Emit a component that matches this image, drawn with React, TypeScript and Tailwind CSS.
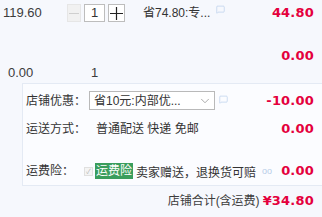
import { ChevronDown, MessageSquare } from "lucide-react";

const cn = `"Liberation Sans", "Noto Sans CJK SC", sans-serif`;
const num = `"DejaVu Sans", sans-serif`;

function Money({ value }: { value: string }) {
  return (
    <span
      className="text-[13px] font-bold text-[#e4003d] tracking-[0.2px]"
      style={{ fontFamily: num }}
    >
      {value}
    </span>
  );
}

export default function App() {
  return (
    <div
      className="w-[322px] h-[217px] overflow-hidden bg-[#f6f8fd] text-[12px] text-[#333]"
      style={{ fontFamily: cn }}
    >
      {/* item row */}
      <div className="h-[26px] flex items-center pr-2">
        <span className="w-[67px] pl-[3px] text-[13px] text-[#3c3c3c]">119.60</span>
        <div className="flex items-center gap-[3px]">
          <span className="w-[14px] h-[18px] border border-[#e6e6e6] bg-[#f1f1f1] flex items-center justify-center">
            <svg width="10" height="10" viewBox="0 0 10 10">
              <path d="M0 5.5h10" stroke="#cfcfcf" strokeWidth="1" />
            </svg>
          </span>
          <span className="w-[21px] h-[18px] border border-[#bdbdbd] bg-white flex items-center justify-center text-[13px]">
            1
          </span>
          <span className="w-[17px] h-[18px] border border-[#bdbdbd] bg-white flex items-center justify-center">
            <svg width="13" height="13" viewBox="0 0 13 13">
              <path d="M0 6.5h13M6.5 0v13" stroke="#222" strokeWidth="1.2" />
            </svg>
          </span>
        </div>
        <span className="ml-[18px] text-[#333]">省74.80:专...</span>
        <MessageSquare className="ml-[6px] -mt-[8px] w-[9px] h-[9px] text-[#a9c4e6]" strokeWidth={1.5} />
        <span className="ml-auto">
          <Money value="44.80" />
        </span>
      </div>

      <div className="h-[22px]" />

      <div className="h-[15px] flex items-center justify-end pr-2">
        <Money value="0.00" />
      </div>

      <div className="h-[20px] flex items-center text-[13px] text-[#3c3c3c]">
        <span className="w-[91px] pl-[8px]">0.00</span>
        <span>1</span>
      </div>

      {/* shop section */}
      <div className="ml-[22px] h-[103px] bg-[#fbfcff] border-t border-l border-b border-[#e4eaf4] flex flex-col">
        <div className="h-[33px] flex items-center pl-[3px] pr-2">
          <span className="w-[63px]">店铺优惠：</span>
          <div className="w-[126px] h-[19px] bg-white border border-[#b9b9b9] flex items-center pl-[4px] pr-[2px]">
            <span className="flex-1">省10元:内部优...</span>
            <ChevronDown className="w-[14px] h-[14px] text-[#888]" strokeWidth={1.2} />
          </div>
          <MessageSquare className="ml-[4px] -mt-[2px] w-[9px] h-[9px] text-[#a9c4e6]" strokeWidth={1.5} />
          <span className="ml-auto">
            <Money value="-10.00" />
          </span>
        </div>

        <div className="h-[24px] flex items-center pl-[3px] pr-2">
          <span className="w-[70px]">运送方式：</span>
          <span>普通配送 快递 免邮</span>
          <span className="ml-auto">
            <Money value="0.00" />
          </span>
        </div>

        <div className="h-[20px]" />

        <div className="h-[20px] flex items-center pl-[3px] pr-2">
          <span className="w-[58px]">运费险：</span>
          <span className="w-[9px] h-[9px] border border-[#e0e0e0] bg-[#f4f4f4] text-[7px] leading-none text-[#bbb] flex items-center justify-center">
            ✓
          </span>
          <span className="ml-[2px] px-[1px] bg-[#3a9d5d] text-white leading-[16px]">运费险</span>
          <span className="ml-[3px] mt-[3px]">卖家赠送，退换货可赔</span>
          <span className="ml-[6px] mt-[2px] text-[9px] text-[#b8cde8]">oo</span>
          <span className="ml-auto">
            <Money value="0.00" />
          </span>
        </div>
      </div>

      <div className="h-[30px] flex items-center justify-end pr-2 gap-[3px]">
        <span className="text-[#3c3c3c]">店铺合计(含运费)</span>
        <Money value="¥34.80" />
      </div>
    </div>
  );
}
